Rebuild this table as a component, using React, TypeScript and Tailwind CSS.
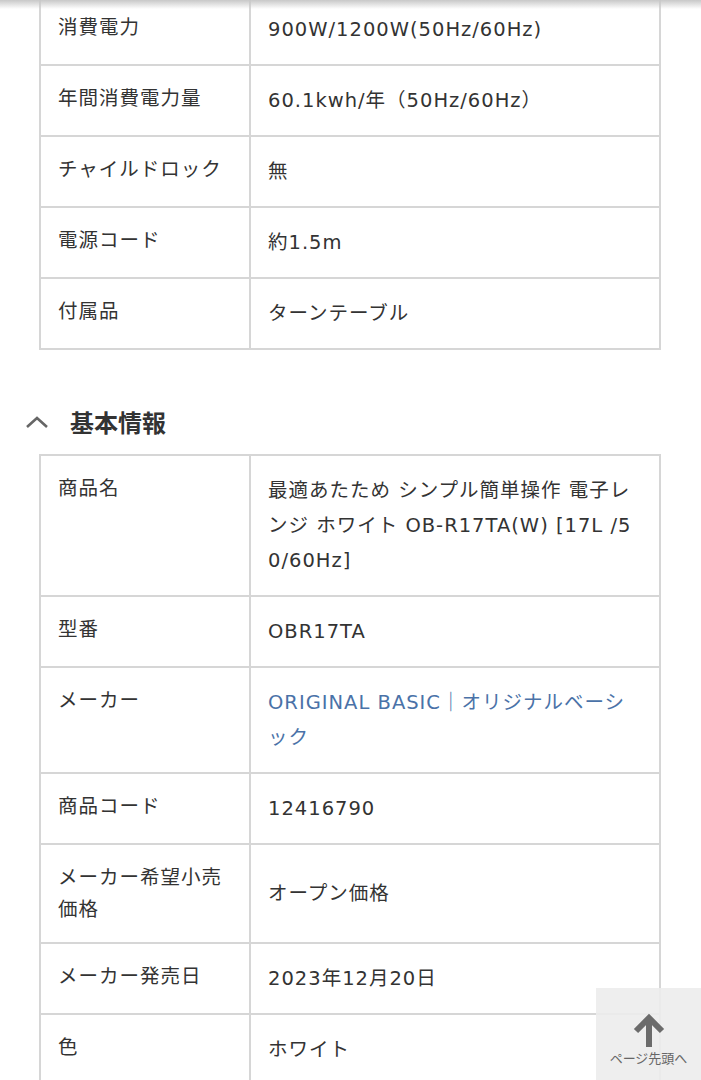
const font = { fontFamily: '"DejaVu Sans", "Noto Sans CJK JP", sans-serif' };

interface Row {
  label: string;
  value: React.ReactNode;
}

const specRows: Row[] = [
  { label: "消費電力", value: "900W/1200W(50Hz/60Hz)" },
  { label: "年間消費電力量", value: "60.1kwh/年（50Hz/60Hz）" },
  { label: "チャイルドロック", value: "無" },
  { label: "電源コード", value: "約1.5m" },
  { label: "付属品", value: "ターンテーブル" },
];

const basicRows: Row[] = [
  { label: "商品名", value: "最適あたため シンプル簡単操作 電子レンジ ホワイト OB-R17TA(W) [17L /50/60Hz]" },
  { label: "型番", value: "OBR17TA" },
  {
    label: "メーカー",
    value: <span className="text-[#4a72a8]">ORIGINAL BASIC｜オリジナルベーシック</span>,
  },
  { label: "商品コード", value: "12416790" },
  { label: "メーカー希望小売価格", value: "オープン価格" },
  { label: "メーカー発売日", value: "2023年12月20日" },
  { label: "色", value: "ホワイト" },
];

const SpecTable: React.FC<{ rows: Row[] }> = ({ rows }) => (
  <table className="ml-[39px] w-[622px] border-collapse text-[19.5px] tracking-[1px] text-[#333]">
    <tbody>
      {rows.map((r) => (
        <tr key={r.label}>
          <th className="w-[210px] border-2 border-[#d6d6d6] px-[17px] pt-[17px] pb-[16px] text-left align-top font-normal leading-[32px]">
            {r.label}
          </th>
          <td className="border-2 border-[#d6d6d6] px-[17px] py-[17px] align-middle leading-[35px] break-all">
            {r.value}
          </td>
        </tr>
      ))}
    </tbody>
  </table>
);

export default function App() {
  return (
    <div className="relative h-[1080px] overflow-hidden bg-white" style={font}>
      <div className="-mt-[7px]">
        <SpecTable rows={specRows} />

        <div className="mt-[56px] mb-[16px] flex h-[32px] items-center">
          <svg width="24" height="14" viewBox="0 0 24 14" className="ml-[25px]">
            <path d="M2 12 L12 3 L22 12" fill="none" stroke="#666" strokeWidth="2.6" />
          </svg>
          <h2
            className="ml-[21px] text-[24px] font-bold text-[#333]"
            style={{ fontFamily: '"Noto Sans CJK JP", sans-serif' }}
          >
            基本情報
          </h2>
        </div>

        <SpecTable rows={basicRows} />
      </div>

      <div className="pointer-events-none absolute inset-x-0 top-0 h-[9px] bg-gradient-to-b from-[#c8c8c8] to-transparent" />

      <div className="absolute right-0 bottom-0 flex h-[92px] w-[105px] flex-col items-center bg-[#ececec]/90">
        <svg width="36" height="36" viewBox="0 0 36 36" className="mt-[25px]">
          <path d="M18 5 L18 34 M5 18 L18 5 L31 18" fill="none" stroke="#6b6b6b" strokeWidth="6" />
        </svg>
        <span
          className="mt-[2px] whitespace-nowrap text-[13px] leading-none text-[#666]"
          style={{ fontFamily: '"Noto Sans CJK JP", sans-serif' }}
        >
          ページ先頭へ
        </span>
      </div>
    </div>
  );
}
